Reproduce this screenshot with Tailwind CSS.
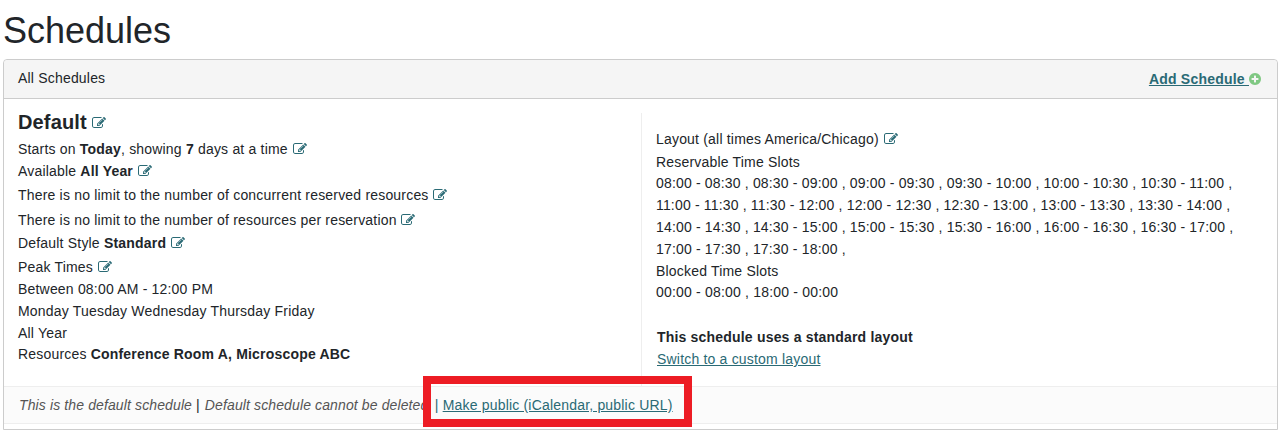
<!DOCTYPE html>
<html lang="en">
  <head>
    <meta charset="UTF-8" />
    <title>Schedules</title>
    <script src="https://cdn.jsdelivr.net/npm/@tailwindcss/browser@4"></script>
  </head>
  <body class="relative h-[430px] overflow-hidden bg-white font-['Liberation_Sans',Arial,sans-serif] text-[14px] leading-[22px] tracking-[0.19px] text-[#212529]">
    <svg class="hidden">
      <symbol id="edit" viewBox="0 0 1792 1792"><path fill="currentColor" d="M888 1184l116-116-152-152-116 116v56h96v96h56zm440-720q-16-16-33 1l-350 350q-17 17-1 33t33-1l350-350q17-17 1-33zm80 594v190q0 119-84.5 203.5t-203.5 84.5h-832q-119 0-203.5-84.5t-84.5-203.5v-832q0-119 84.5-203.5t203.5-84.5h832q63 0 117 25 15 7 18 23 3 17-9 29l-49 49q-14 14-32 8-23-6-45-6h-832q-66 0-113 47t-47 113v832q0 66 47 113t113 47h832q66 0 113-47t47-113v-126q0-13 9-22l64-64q15-15 35-7t20 29zm-96-738l288 288-672 672h-288v-288zm444 132l-92 92-288-288 92-92q28-28 68-28t68 28l152 152q28 28 28 68t-28 68z"/></symbol>
    </svg>

    <h1 class="ml-[3px] h-[59px] pt-[11px] text-[36px] leading-[40px] font-normal tracking-normal">Schedules</h1>

    <div class="ml-[3px] h-[371px] w-[1275px] rounded-t-[4px] border border-[#ccc]">
      <div class="flex h-[39px] items-center justify-between rounded-t-[4px] border-b border-[#ccc] bg-[#f5f5f5] pl-[14px] pr-[15px]">
        <span class="-mt-[2px]">All Schedules</span>
        <a href="#" class="flex items-center font-bold tracking-[0.22px] text-[#2a6a75] underline">
          Add Schedule&nbsp;<svg class="-ml-[1px] h-[14px] w-[14px] text-[#80c883]" viewBox="0 0 1792 1792"><path fill="currentColor" d="M1344 960v-128q0-26-19-45t-45-19h-256v-256q0-26-19-45t-45-19h-128q-26 0-45 19t-19 45v256h-256q-26 0-45 19t-19 45v128q0 26 19 45t45 19h256v256q0 26 19 45t45 19h128q26 0 45-19t19-45v-256h256q26 0 45-19t19-45zm320-64q0 209-103 385.500t-279.500 279.500-385.500 103-385.500-103-279.500-279.500-103-385.500 103-385.500 279.500-279.500 385.500-103 385.500 103 279.500 279.500 103 385.500z"/></svg>
        </a>
      </div>

      <div class="flex h-[287px]">
        <div class="w-[637px] pl-[14px] pt-[7px]">
          <div class="flex h-[32px] items-center gap-[5px] text-[20px] font-bold leading-[30px] tracking-[0.15px]">Default <svg class="mt-[2px] h-[14px] w-[14px] text-[#2a6a75]"><use href="#edit" /></svg></div>
          <div class="flex items-center gap-[5px]"><span>Starts on <b>Today</b>, showing <b>7</b> days at a time</span> <svg class="h-[14px] w-[14px] text-[#2a6a75]"><use href="#edit" /></svg></div>
          <div class="flex items-center gap-[5px]"><span>Available <b>All Year</b></span> <svg class="h-[14px] w-[14px] text-[#2a6a75]"><use href="#edit" /></svg></div>
          <div class="mt-[2px] flex items-center gap-[4px]"><span>There is no limit to the number of concurrent reserved resources</span> <svg class="h-[14px] w-[14px] text-[#2a6a75]"><use href="#edit" /></svg></div>
          <div class="mt-[3px] flex items-center gap-[4px]"><span>There is no limit to the number of resources per reservation</span> <svg class="h-[14px] w-[14px] text-[#2a6a75]"><use href="#edit" /></svg></div>
          <div class="mt-[1px] flex items-center gap-[5px]"><span>Default Style <b>Standard</b></span> <svg class="h-[14px] w-[14px] text-[#2a6a75]"><use href="#edit" /></svg></div>
          <div class="mt-[2px] flex items-center gap-[5px]"><span>Peak Times</span> <svg class="h-[14px] w-[14px] text-[#2a6a75]"><use href="#edit" /></svg></div>
          <div>Between 08:00 AM - 12:00 PM</div>
          <div>Monday Tuesday Wednesday Thursday Friday</div>
          <div>All Year</div>
          <div class="-mt-[1px]">Resources <b>Conference Room A, Microscope ABC</b></div>
        </div>

        <div class="mt-[14px] flex-1 border-l border-[#eee] pl-[14px] pr-[15px] pt-[15px]">
          <div class="flex items-center gap-[5px]"><span>Layout (all times America/Chicago)</span> <svg class="h-[14px] w-[14px] text-[#2a6a75]"><use href="#edit" /></svg></div>
          <div class="mt-[1px]">Reservable Time Slots</div>
          <p class="-mt-[1px] tracking-[0.17px]">08:00 - 08:30 , 08:30 - 09:00 , 09:00 - 09:30 , 09:30 - 10:00 , 10:00 - 10:30 , 10:30 - 11:00 , <br />11:00 - 11:30 , 11:30 - 12:00 , 12:00 - 12:30 , 12:30 - 13:00 , 13:00 - 13:30 , 13:30 - 14:00 , <br />14:00 - 14:30 , 14:30 - 15:00 , 15:00 - 15:30 , 15:30 - 16:00 , 16:00 - 16:30 , 16:30 - 17:00 , <br />17:00 - 17:30 , 17:30 - 18:00 ,</p>
          <div>Blocked Time Slots</div>
          <div class="-mt-[1px]">00:00 - 08:00 , 18:00 - 00:00</div>
          <div class="ml-px mt-[23px] font-bold">This schedule uses a standard layout</div>
          <a href="#" class="ml-px text-[#2a6a75] underline">Switch to a custom layout</a>
        </div>
      </div>

      <div class="flex h-[38px] items-center border-y border-[#eee] bg-[#fbfbfb] pl-[15px]">
        <i class="tracking-[0.12px] text-[#555]">This is the default schedule</i>
        <span class="pl-[4px] pr-[5px]">|</span>
        <i class="tracking-[0.12px] text-[#555]">Default schedule cannot be deleted</i>
        <span class="pl-[6.4px] pr-[4px] text-[#2a6a75]">|</span>
        <a href="#" class="text-[#2a6a75] underline">Make public (iCalendar, public URL)</a>
      </div>
    </div>

    <div class="absolute left-[423px] top-[376px] h-[51px] w-[269px] border-[8px] border-[#ed1c24]"></div>
  </body>
</html>
